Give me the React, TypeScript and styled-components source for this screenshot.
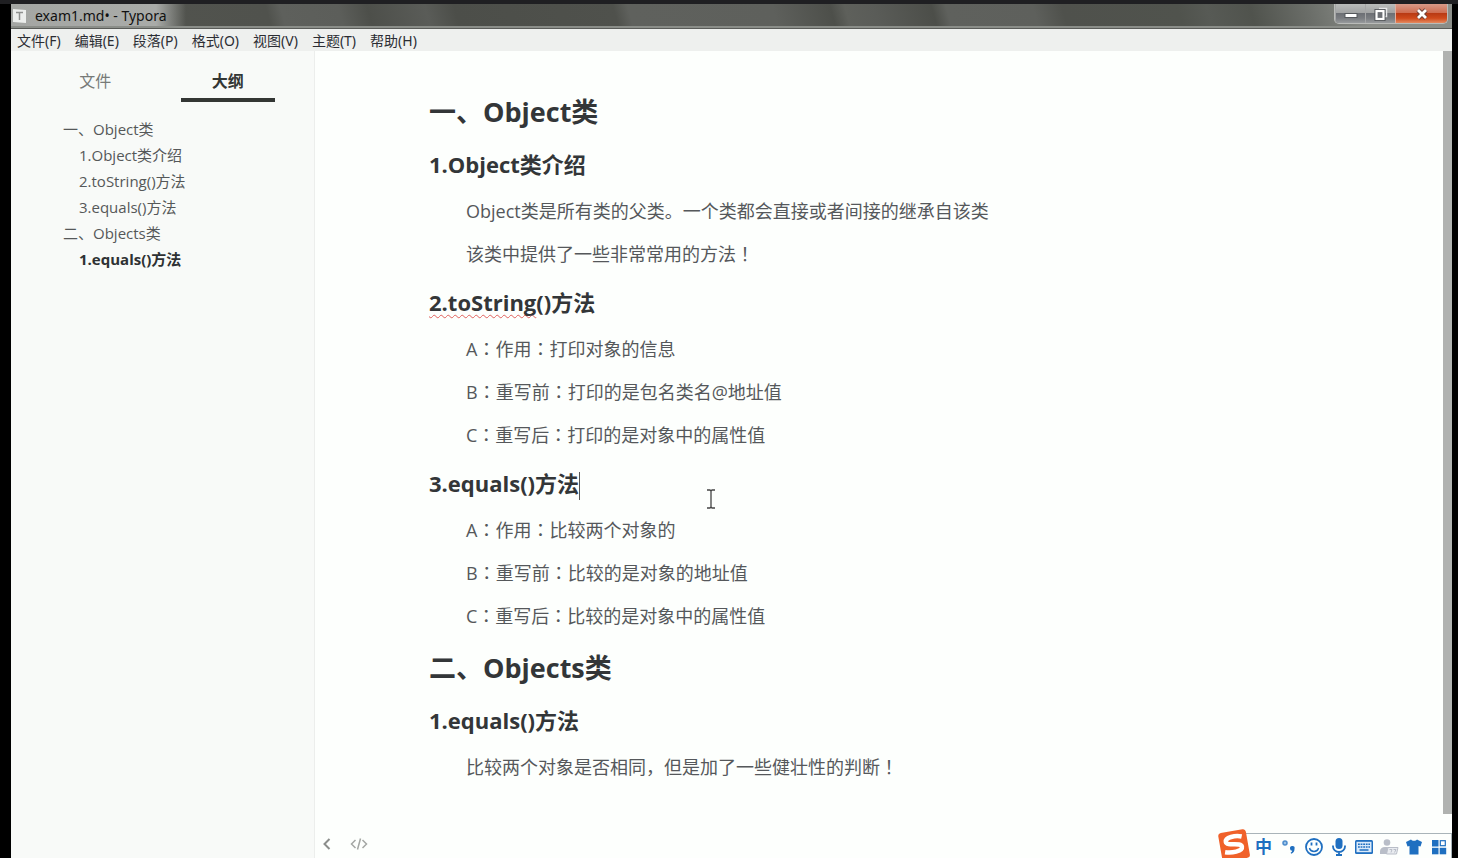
import React, { useState } from "react";
import styled, { createGlobalStyle } from "styled-components";

const sans = `"Open Sans", "Noto Sans CJK SC", sans-serif`;

const GlobalStyle = createGlobalStyle`
  * { box-sizing: border-box; }
  body { margin: 0; background: #000; font-family: ${sans}; }
  button { font: inherit; color: inherit; background: none; border: 0; padding: 0; cursor: pointer; }
`;

const Screen = styled.div`
  min-height: 100vh;
  display: flex;
  flex-direction: column;
  padding: 0 6px 0 11px;
  border-top: 4px solid #1f1f22;
  background: #000;
`;

const TitleBar = styled.header`
  display: flex;
  align-items: flex-start;
  justify-content: space-between;
  height: 25px;
  border-bottom: 1px solid #5a5c59;
  box-shadow: inset 0 -2px 0 #8b8e89;
  background:
    linear-gradient(90deg, #a4a6a3 0, #a9aba8 145px, transparent 175px),
    linear-gradient(75deg, #53554f 0, #50524d 18%, #5e605c 19%, #5c5e5a 23%, #4d4f4a 25%, #5a5c58 29%, #4c4e49 31%,
      #4f514c 42%, #5f615d 43%, #5e605c 53%, #4d4f4a 57%, #5e605b 58%, #5a5c58 60%, #4c4e49 64%, #5f615d 65%,
      #5e605c 71%, #4f514c 73%, #50534d 81%, #575a55 83%, #50534d 86%, #6b6e69 90%, #8b8e89 94%);
`;

const Title = styled.h1`
  display: flex;
  align-items: center;
  gap: 8px;
  margin: 0;
  padding-left: 1px;
  font-size: 14px;
  line-height: 24px;
  font-weight: 400;
  color: #111;
  font-family: "Noto Sans", sans-serif;
`;

const Caption = styled.div`
  display: flex;
  margin-right: 4px;
  border: 1px solid #b9bbb8;
  border-top: 0;
  border-radius: 0 0 5px 5px;
  overflow: hidden;
`;

const CaptionButton = styled.button<{ $close?: boolean }>`
  display: flex;
  align-items: center;
  justify-content: center;
  width: ${(p) => (p.$close ? 52 : 30)}px;
  height: 19px;
  border-left: 1px solid ${(p) => (p.$close ? "#e0b0a0" : "#a4a5a6")};
  background: ${(p) =>
    p.$close
      ? "linear-gradient(#d89a88 0, #cf6e52 45%, #b93a14 50%, #cf4a1c 75%, #e58a60 100%)"
      : "linear-gradient(#b9bbba 0, #a2a4a4 45%, #6d7075 50%, #7a7d81 75%, #979a9c 100%)"};
`;

const MenuBar = styled.nav`
  display: flex;
  gap: 14px;
  height: 22px;
  padding-left: 6px;
  background: #eef0ee;
  font-family: "Noto Sans", "Noto Sans CJK SC", sans-serif;
  font-size: 14px;
  line-height: 24px;
  color: #2b2d33;
`;

const MenuItem = styled.button`
  white-space: nowrap;
`;

const Main = styled.div`
  flex: 1;
  display: flex;
  background: #fdfffd;
`;

const Sidebar = styled.aside`
  flex: none;
  width: 304px;
  border-right: 1px solid #eceeec;
  background: #f8faf8;
`;

const Tabs = styled.div`
  display: flex;
  gap: 38px;
  padding: 0 39px 0 37px;
`;

const Tab = styled.button<{ $active: boolean }>`
  flex: 1;
  padding: 20px 0 7px;
  border-bottom: 4px solid ${(p) => (p.$active ? "#333634" : "transparent")};
  font-size: 16px;
  line-height: 20px;
  font-weight: ${(p) => (p.$active ? 700 : 400)};
  color: ${(p) => (p.$active ? "#333634" : "#777a78")};
`;

const Outline = styled.nav`
  display: flex;
  flex-direction: column;
  padding: 14px 20px 0 52px;
`;

const OutlineLink = styled.a<{ $level: number; $active?: boolean }>`
  padding-left: ${(p) => (p.$level - 1) * 16}px;
  font-size: 15px;
  line-height: 26px;
  font-weight: ${(p) => (p.$active ? 700 : 400)};
  color: ${(p) => (p.$active ? "#2e3133" : "#555859")};
  text-decoration: none;
`;

const Editor = styled.main`
  flex: 1;
  position: relative;
  display: flex;
  min-width: 0;
`;

const Article = styled.article`
  flex: 1;
  padding: 24px 114px 48px;
  color: #333638;
`;

const Heading1 = styled.h2`
  margin: 19px 0;
  font-size: 27px;
  line-height: 36px;
  font-weight: 700;
`;

const Heading2 = styled.h3`
  margin: 18px 0;
  font-size: 22px;
  line-height: 30px;
  font-weight: 700;
`;

const Paragraph = styled.p`
  margin: 14px 0;
  padding-left: 37px;
  font-size: 18px;
  line-height: 29px;
  color: #55585b;
`;

const Mark = styled.span`
  font-family: "Noto Sans CJK TC", sans-serif;
  line-height: 1;
`;

const Misspelled = styled.span`
  text-decoration: underline wavy #e0605c 1px;
  text-decoration-skip-ink: none;
  text-underline-offset: 3px;
`;

const Caret = styled.span`
  display: inline-block;
  width: 1px;
  height: 28px;
  margin: -4px 0;
  vertical-align: middle;
  background: #555;
`;

const Pointer = styled.svg`
  position: absolute;
  left: 391px;
  top: 438px;
`;

const ScrollTrack = styled.div`
  flex: none;
  width: 9px;
  padding-bottom: 44px;
  display: flex;
`;

const ScrollThumb = styled.div`
  flex: 1;
  background: #b0b2b0;
`;

const Footer = styled.footer`
  position: absolute;
  left: 7px;
  bottom: 6px;
  display: flex;
  gap: 18px;
  color: #8b8e8b;
`;

const FooterButton = styled.button`
  display: flex;
`;

const Ime = styled.div`
  position: fixed;
  right: 6px;
  bottom: 0;
  display: flex;
  align-items: flex-end;
`;

const ImeLogo = styled.button`
  position: relative;
  display: flex;
  margin-right: -7px;
`;

const ImeBar = styled.div`
  display: flex;
  height: 25px;
  padding-left: 6px;
  border-top: 1px solid #a9b4b9;
  border-right: 1px solid #a9b4b9;
  background: #fdfffd;
  color: #1f6fc0;
`;

const ImeButton = styled.button`
  display: flex;
  align-items: center;
  justify-content: center;
  width: 25px;
  padding-top: 2px;
  font-size: 17px;
  line-height: 22px;
  font-weight: 700;
`;

const menus = ["文件(F)", "编辑(E)", "段落(P)", "格式(O)", "视图(V)", "主题(T)", "帮助(H)"];

type Block = { kind: "h1" | "h2" | "p"; text: string; caret?: boolean; misspelled?: string };

const blocks: Block[] = [
  { kind: "h1", text: "一、Object类" },
  { kind: "h2", text: "1.Object类介绍" },
  { kind: "p", text: "Object类是所有类的父类。一个类都会直接或者间接的继承自该类" },
  { kind: "p", text: "该类中提供了一些非常常用的方法！" },
  { kind: "h2", text: "()方法", misspelled: "2.toString" },
  { kind: "p", text: "A：作用：打印对象的信息" },
  { kind: "p", text: "B：重写前：打印的是包名类名@地址值" },
  { kind: "p", text: "C：重写后：打印的是对象中的属性值" },
  { kind: "h2", text: "3.equals()方法", caret: true },
  { kind: "p", text: "A：作用：比较两个对象的" },
  { kind: "p", text: "B：重写前：比较的是对象的地址值" },
  { kind: "p", text: "C：重写后：比较的是对象中的属性值" },
  { kind: "h1", text: "二、Objects类" },
  { kind: "h2", text: "1.equals()方法" },
  { kind: "p", text: "比较两个对象是否相同，但是加了一些健壮性的判断！" },
];

const headings = blocks
  .map((b, i) => ({ id: `s${i}`, level: b.kind === "h1" ? 1 : 2, kind: b.kind, text: (b.misspelled ?? "") + b.text }))
  .filter((b) => b.kind !== "p");

// Colons and exclamation marks sit in the middle of their full-width cell.
function centred(text: string) {
  return text.split(/([：！])/).map((part, i) => (i % 2 ? <Mark key={i}>{part}</Mark> : part));
}

function BlockView({ block, id }: { block: Block; id: string }) {
  if (block.kind === "p") return <Paragraph>{centred(block.text)}</Paragraph>;
  const Tag = block.kind === "h1" ? Heading1 : Heading2;
  return (
    <Tag id={id}>
      {block.misspelled && <Misspelled>{block.misspelled}</Misspelled>}
      {block.text}
      {block.caret && <Caret />}
    </Tag>
  );
}

function ImeTools() {
  return (
    <Ime>
      <ImeLogo aria-label="输入法">
        <svg width="35" height="30" viewBox="0 0 35 30">
          <g transform="rotate(-10 17 17)">
            <rect x="3" y="3" width="28" height="29" rx="3" fill="#f0612a" />
            <path d="M26 10C20 7.500 9.500 8 9.500 12.500C9.500 17.500 24.500 15 24.500 20C24.500 25 13 24.500 7 22.500" fill="none" stroke="#fff" strokeWidth="4.500" />
          </g>
        </svg>
      </ImeLogo>
      <ImeBar>
        <ImeButton>中</ImeButton>
        <ImeButton aria-label="标点">
          <svg width="16" height="16" viewBox="0 0 16 16">
            <circle cx="4" cy="4" r="2" fill="#9cc3e6" stroke="#4c8ccc" strokeWidth="1.500" />
            <path d="M9 9.500a2.300 2.300 0 1 1 4.500 .4c0 2.500-1.200 4-3.300 4.800l-.6-1c1-.5 1.500-1 1.600-1.900A2.300 2.300 0 0 1 9 9.500z" fill="currentColor" />
          </svg>
        </ImeButton>
        <ImeButton aria-label="表情">
          <svg width="20" height="20" viewBox="0 0 20 20" fill="none" stroke="currentColor">
            <circle cx="10" cy="10" r="8" strokeWidth="1.800" />
            <path d="M5.500 11c1 4.500 8 4.500 9 0" strokeWidth="1.500" />
            <path d="M7.500 5.500v3M12.500 5.500v3" strokeWidth="1.800" />
          </svg>
        </ImeButton>
        <ImeButton aria-label="语音">
          <svg width="16" height="20" viewBox="0 0 16 20">
            <rect x="4.500" y="1" width="7" height="11" rx="3.500" fill="currentColor" />
            <path d="M2 8.500v1a6 5.500 0 0 0 12 0v-1M8 15v3M5 18h6" fill="none" stroke="currentColor" strokeWidth="1.800" />
          </svg>
        </ImeButton>
        <ImeButton aria-label="键盘">
          <svg width="20" height="16" viewBox="0 0 20 16">
            <rect x="1" y="1" width="18" height="14" rx="1.500" fill="currentColor" />
            <rect x="2.500" y="2.800" width="15" height="10.400" fill="#d9eafa" />
            <path d="M4 5.200h12M4 8h12" stroke="currentColor" strokeWidth="1.500" strokeDasharray="1.800 .8" />
            <path d="M5.500 11h9" stroke="currentColor" strokeWidth="1.500" />
          </svg>
        </ImeButton>
        <ImeButton aria-label="个人中心">
          <svg width="22" height="18" viewBox="0 0 22 18">
            <circle cx="9" cy="4.500" r="3.300" fill="#b9bec8" />
            <path d="M2 16v-2.500c0-3 2-4.500 5-4.500h3l-1 7z" fill="#b9bec8" />
            <path d="M10 9.500h10l-1.500 6.500h-10z" fill="#e9ecf0" stroke="#b9bec8" />
            <path d="M11.500 11.500h2.500l-1 3M15.500 11.500h2.500l-1.500 3" fill="none" stroke="#b9bec8" />
          </svg>
        </ImeButton>
        <ImeButton aria-label="皮肤">
          <svg width="18" height="18" viewBox="0 0 18 18">
            <path d="M6 1.500c1 1.800 5 1.800 6 0L17 4l-1.500 4.500L13.500 8v8.500h-9V8l-2 .5L1 4z" fill="currentColor" />
          </svg>
        </ImeButton>
        <ImeButton aria-label="工具箱">
          <svg width="16" height="16" viewBox="0 0 16 16" fill="currentColor">
            <rect x="1" y="1" width="6.500" height="6.500" />
            <rect x="9.300" y="1.700" width="5" height="5" fill="#fff" stroke="currentColor" strokeWidth="1.200" />
            <rect x="1" y="8.800" width="6.500" height="6.500" />
            <rect x="8.700" y="8.800" width="6.500" height="6.500" />
          </svg>
        </ImeButton>
      </ImeBar>
    </Ime>
  );
}

export default function App() {
  const [tab, setTab] = useState("大纲");
  return (
    <Screen>
      <GlobalStyle />
      <TitleBar>
        <Title>
          <svg width="15" height="16" viewBox="0 0 15 16">
            <path d="M1 1l13 1v13l-13-1z" fill="#eceeec" />
            <path d="M4 4.500h7M7.500 4.500v7.500" stroke="#8e908e" strokeWidth="1.500" />
          </svg>
          exam1.md• - Typora
        </Title>
        <Caption>
          <CaptionButton aria-label="最小化">
            <svg width="14" height="8" viewBox="0 0 14 8">
              <rect x="1" y="3.500" width="12" height="4" fill="#fff" stroke="#55585c" />
            </svg>
          </CaptionButton>
          <CaptionButton aria-label="还原">
            <svg width="14" height="14" viewBox="0 0 14 14">
              <path d="M5 1.500h7.500v8h-2" fill="none" stroke="#e6e7e8" strokeWidth="1.500" />
              <rect x="2.500" y="4" width="7" height="8" fill="none" stroke="#4d5054" strokeWidth="4" />
              <rect x="2.500" y="4" width="7" height="8" fill="#6d7075" stroke="#fff" strokeWidth="2.200" />
            </svg>
          </CaptionButton>
          <CaptionButton $close aria-label="关闭">
            <svg width="14" height="12" viewBox="0 0 14 12">
              <path d="M3 2l8 8M11 2l-8 8" stroke="#6e4038" strokeWidth="4.600" />
              <path d="M3 2l8 8M11 2l-8 8" stroke="#fff" strokeWidth="2.800" />
            </svg>
          </CaptionButton>
        </Caption>
      </TitleBar>
      <MenuBar>
        {menus.map((m) => (
          <MenuItem key={m}>{m}</MenuItem>
        ))}
      </MenuBar>
      <Main>
        <Sidebar>
          <Tabs>
            {["文件", "大纲"].map((t) => (
              <Tab key={t} $active={t === tab} onClick={() => setTab(t)}>
                {t}
              </Tab>
            ))}
          </Tabs>
          <Outline>
            {headings.map((h, i) => (
              <OutlineLink key={h.id} href={`#${h.id}`} $level={h.level} $active={i === headings.length - 1}>
                {h.text}
              </OutlineLink>
            ))}
          </Outline>
        </Sidebar>
        <Editor>
          <Article>
            {blocks.map((b, i) => (
              <BlockView key={i} id={`s${i}`} block={b} />
            ))}
          </Article>
          <Pointer width="10" height="20" viewBox="0 0 10 20">
            <path d="M1 1h3l1 1 1-1h3M5 2v16M1 19h3l1-1 1 1h3" fill="none" stroke="#444" strokeWidth="1.300" />
          </Pointer>
          <Footer>
            <FooterButton aria-label="收起侧边栏">
              <svg width="10" height="16" viewBox="0 0 10 16">
                <path d="M7.500 3L2.500 8l5 5" fill="none" stroke="currentColor" strokeWidth="2" />
              </svg>
            </FooterButton>
            <FooterButton aria-label="源代码模式">
              <svg width="18" height="16" viewBox="0 0 18 16">
                <path d="M5.500 4L1.500 8l4 4M12.500 4l4 4-4 4M10.500 2.500l-3 11" fill="none" stroke="#a4a7a4" strokeWidth="1.500" />
              </svg>
            </FooterButton>
          </Footer>
          <ScrollTrack>
            <ScrollThumb />
          </ScrollTrack>
        </Editor>
      </Main>
      <ImeTools />
    </Screen>
  );
}
